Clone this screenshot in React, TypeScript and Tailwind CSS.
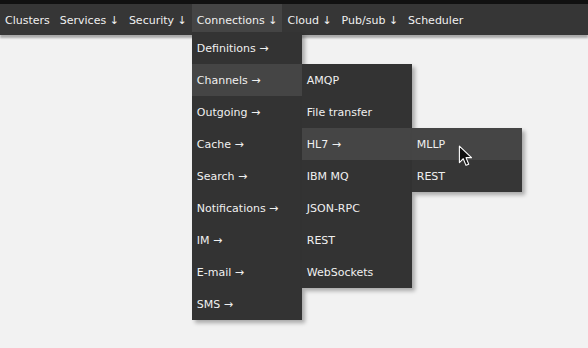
const font = { fontFamily: '"DejaVu Sans", Verdana, sans-serif' };

type Item = { label: string; arrow?: boolean; active?: boolean };

const topItems: Item[] = [
  { label: "Clusters" },
  { label: "Services ↓" },
  { label: "Security ↓" },
  { label: "Connections ↓", active: true },
  { label: "Cloud ↓" },
  { label: "Pub/sub ↓" },
  { label: "Scheduler" },
];

const connections = [
  "Definitions",
  "Channels",
  "Outgoing",
  "Cache",
  "Search",
  "Notifications",
  "IM",
  "E-mail",
  "SMS",
];

const channels: Item[] = [
  { label: "AMQP" },
  { label: "File transfer" },
  { label: "HL7", arrow: true, active: true },
  { label: "IBM MQ" },
  { label: "JSON-RPC" },
  { label: "REST" },
  { label: "WebSockets" },
];

function MenuRow({ label, active, children }: { label: string; active?: boolean; children?: React.ReactNode }) {
  return (
    <div
      className={
        "relative flex h-8 w-[110px] items-center px-[5px] pt-[2px] " +
        (active ? "bg-[#454545]" : "")
      }
    >
      <span className="whitespace-nowrap">{label}</span>
      {children}
    </div>
  );
}

function Cursor() {
  return (
    <svg className="absolute left-[458px] top-[145px]" width="16" height="22" viewBox="0 0 14 20">
      <path
        d="M1 1 L1 16 L4.5 12.5 L7 18.5 L9.5 17.5 L7 11.5 L12 11.5 Z"
        fill="#111"
        stroke="#fff"
        strokeWidth="1"
        strokeLinejoin="round"
      />
    </svg>
  );
}

export default function App() {
  return (
    <div
      className="relative h-[348px] w-[588px] overflow-hidden bg-[#f2f2f2] text-[11px] text-[#f0f0f0]"
      style={font}
    >
      <div className="h-1 bg-[#111]" />
      <nav className="relative z-10 flex h-[31px] bg-[#363636] shadow-[0_3px_2px_rgba(0,0,0,0.3)]">
        {topItems.map((item) => (
          <div
            key={item.label}
            className={
              "relative flex h-[28px] items-center px-[5px] pt-[6px] whitespace-nowrap " +
              (item.active ? "bg-[#454545]" : "")
            }
          >
            {item.label}
            {item.active && (
              <div className="absolute left-0 top-[28px] bg-[#333] shadow-[3px_3px_4px_rgba(0,0,0,0.3)]">
                {connections.map((c) => (
                  <MenuRow key={c} label={c + " →"} active={c === "Channels"}>
                    {c === "Channels" && (
                      <div className="absolute left-full top-0 bg-[#333] shadow-[3px_3px_4px_rgba(0,0,0,0.3)]">
                        {channels.map((ch) => (
                          <MenuRow
                            key={ch.label}
                            label={ch.label + (ch.arrow ? " →" : "")}
                            active={ch.active}
                          >
                            {ch.label === "HL7" && (
                              <div className="absolute left-full top-0 bg-[#363636] shadow-[3px_3px_4px_rgba(0,0,0,0.3)]">
                                <MenuRow label="MLLP" active />
                                <MenuRow label="REST" />
                              </div>
                            )}
                          </MenuRow>
                        ))}
                      </div>
                    )}
                  </MenuRow>
                ))}
              </div>
            )}
          </div>
        ))}
      </nav>
      <div className="absolute inset-0 z-20 pointer-events-none">
        <Cursor />
      </div>
    </div>
  );
}
